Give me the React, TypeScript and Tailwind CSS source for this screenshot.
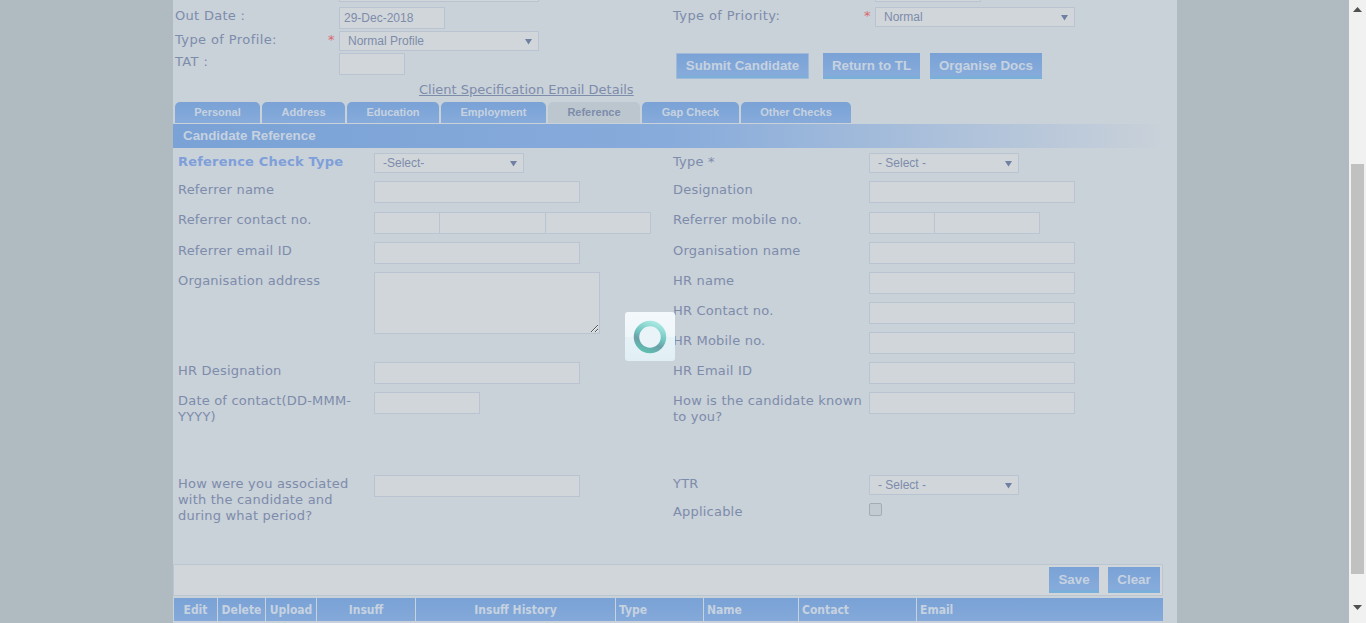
const labelFont = 'font-["DejaVu_Sans",sans-serif] text-[13px] leading-4 text-[#7d8cab] tracking-[0.2px]';
const boxStyle = 'box-border border border-[#b9c3d1] bg-[#d1d6da]';

const Input = ({ className = '', value = '' }: { className?: string; value?: string }) => (
  <input
    readOnly
    value={value}
    className={`${boxStyle} h-[22px] px-1 font-["Liberation_Sans",sans-serif] text-xs text-[#7d8cab] outline-none ${className}`}
  />
);

const Select = ({ text, className = '' }: { text: string; className?: string }) => (
  <div className={`${boxStyle} flex h-5 items-center justify-between pr-[6px] pl-2 font-["Liberation_Sans",sans-serif] text-xs text-[#7d8cab] ${className}`}>
    <span>{text}</span>
    <svg width="7" height="7" viewBox="0 0 7 7">
      <path d="M0 1h7L3.5 6.5z" fill="#6f80a3" />
    </svg>
  </div>
);

const Field = ({ label, children, className = '' }: { label: string; children?: React.ReactNode; className?: string }) => (
  <div className={`flex ${className}`}>
    <div className={`${labelFont} w-[196px] shrink-0 pt-px`}>{label}</div>
    {children}
  </div>
);

const Tab = ({ label, width, active }: { label: string; width: string; active?: boolean }) => (
  <div
    className={`flex h-[21px] items-center justify-center rounded-t-[5px] font-["Liberation_Sans",sans-serif] text-[11px] font-bold ${width} ${
      active ? 'bg-[#bcc6ce] text-[#7d8cab]' : 'bg-gradient-to-b from-[#7aa2d6] to-[#86abdb] text-[#c6d2e0]'
    }`}
  >
    {label}
  </div>
);

const ActionButton = ({ label, width, outlined }: { label: string; width: string; outlined?: boolean }) => (
  <div
    className={`flex h-[26px] items-center justify-center bg-[linear-gradient(#7aa2d6_0%,#86abdb_85%,#79afd8_92%,#79afd8_100%)] font-["Liberation_Sans",sans-serif] text-[13.33px] font-bold text-[#c6d2e0] ${width} ${
      outlined ? 'rounded-[2px] ring-1 ring-inset ring-[#a3b9d8]' : ''
    }`}
  >
    {label}
  </div>
);

const columns = [
  { label: 'Edit', width: 'w-[43px]', center: true },
  { label: 'Delete', width: 'w-[47px]', center: true },
  { label: 'Upload', width: 'w-[50px]', center: true },
  { label: 'Insuff', width: 'w-[98px]', center: true },
  { label: 'Insuff History', width: 'w-[199px]', center: true },
  { label: 'Type', width: 'w-[87px]' },
  { label: 'Name', width: 'w-[94px]' },
  { label: 'Contact', width: 'w-[117px]' },
  { label: 'Email', width: 'flex-1' },
];

const tabs = [
  { label: 'Personal', width: 'w-[85px]' },
  { label: 'Address', width: 'w-[83px]' },
  { label: 'Education', width: 'w-[92px]' },
  { label: 'Employment', width: 'w-[105px]' },
  { label: 'Reference', width: 'w-[92px]', active: true },
  { label: 'Gap Check', width: 'w-[97px]' },
  { label: 'Other Checks', width: 'w-[110px]' },
];

const App = () => {
  return (
    <div className="relative flex h-[623px] w-[1366px] overflow-hidden bg-[#b0bbc1]">
      <div className="ml-[173px] h-full w-[1004px] bg-[#c9d1d9]">
        {/* top of the form, scrolled part way out of view */}
        <div className="flex h-[2px] items-end overflow-hidden pl-[166px]">
          <div className={`${boxStyle} h-5 w-[200px]`} />
          <div className={`${boxStyle} ml-[336px] h-5 w-[106px]`} />
        </div>

        <div className="mt-[5px] flex h-[68px]">
          <div className="w-[500px] pl-[2px]">
            <div className="flex h-6">
              <div className={`${labelFont} w-[164px] pt-px tracking-[0.3px]`}>Out Date :</div>
              <Input value="29-Dec-2018" className="w-[106px] bg-[#c7cdd1]" />
            </div>
            <div className="flex h-[22px]">
              <div className={`${labelFont} flex w-[164px] justify-between pr-1 pt-px tracking-[0.4px]`}>
                Type of Profile:<span className="text-[#d9696e]">*</span>
              </div>
              <Select text="Normal Profile" className="w-[200px]" />
            </div>
            <div className="flex">
              <div className={`${labelFont} w-[164px] pt-px tracking-[0.4px]`}>TAT :</div>
              <Input className="w-[66px]" />
            </div>
          </div>
          <div>
            <div className="flex">
              <div className={`${labelFont} flex w-[202px] justify-between pr-1 pt-px tracking-[0.4px]`}>
                Type of Priority:<span className="text-[#d9696e]">*</span>
              </div>
              <Select text="Normal" className="w-[200px]" />
            </div>
            <div className="mt-[26px] ml-[3px] flex">
              <ActionButton label="Submit Candidate" width="w-[133px]" outlined />
              <ActionButton label="Return to TL" width="w-[97px] ml-[14px]" />
              <ActionButton label="Organise Docs" width="w-[112px] ml-[10px]" />
            </div>
          </div>
        </div>

        <div className={`mt-[7px] pl-[246px] ${labelFont} tracking-normal underline`}>Client Specification Email Details</div>

        <div className="mt-[4px] flex gap-[2px] pl-[2px]">
          {tabs.map((tab) => (
            <Tab key={tab.label} {...tab} />
          ))}
        </div>

        <div className="mt-px flex h-6 w-[991px] items-center bg-gradient-to-r from-[#7aa2d6] via-[#87abdb] to-[#c9d1d9] pl-[10px] font-['Liberation_Sans',sans-serif] text-[13.33px] font-bold text-[#c6d2e0]">
          Candidate Reference
        </div>

        <div className="mt-[5px] flex h-[411px] pl-[5px]">
          <div className="w-[495px]">
            <Field label="Reference Check Type" className="h-7 [&>div:first-child]:font-bold [&>div:first-child]:text-[#7f9fd9]">
              <Select text="-Select-" className="w-[150px]" />
            </Field>
            <Field label="Referrer name" className="h-[31px]">
              <Input className="w-[206px]" />
            </Field>
            <Field label="Referrer contact no." className="h-[30px] [&>div:first-child]:pt-0">
              <Input className="w-[66px]" />
              <Input className="-ml-px w-[107px]" />
              <Input className="-ml-px w-[106px]" />
            </Field>
            <Field label="Referrer email ID" className="h-[30px]">
              <Input className="w-[206px]" />
            </Field>
            <Field label="Organisation address" className="h-[90px]">
              <textarea readOnly className={`${boxStyle} h-[62px] w-[226px] outline-none`} />
            </Field>
            <Field label="HR Designation" className="h-[30px]">
              <Input className="w-[206px]" />
            </Field>
            <Field label="Date of contact(DD-MMM-YYYY)" className="h-[83px]">
              <Input className="w-[106px]" />
            </Field>
            <Field label="How were you associated with the candidate and during what period?">
              <Input className="w-[206px]" />
            </Field>
          </div>
          <div>
            <Field label="Type *" className="h-7">
              <Select text="- Select -" className="w-[150px]" />
            </Field>
            <Field label="Designation" className="h-[31px]">
              <Input className="w-[206px]" />
            </Field>
            <Field label="Referrer mobile no." className="h-[30px] [&>div:first-child]:pt-0">
              <Input className="w-[66px]" />
              <Input className="-ml-px w-[106px]" />
            </Field>
            <Field label="Organisation name" className="h-[30px]">
              <Input className="w-[206px]" />
            </Field>
            <Field label="HR name" className="h-[30px]">
              <Input className="w-[206px]" />
            </Field>
            <Field label="HR Contact no." className="h-[30px]">
              <Input className="w-[206px]" />
            </Field>
            <Field label="HR Mobile no." className="h-[30px]">
              <Input className="w-[206px]" />
            </Field>
            <Field label="HR Email ID" className="h-[30px]">
              <Input className="w-[206px]" />
            </Field>
            <Field label="How is the candidate known to you?" className="h-[83px]">
              <Input className="w-[206px]" />
            </Field>
            <Field label="YTR" className="h-7">
              <Select text="- Select -" className="w-[150px]" />
            </Field>
            <Field label="Applicable">
              <div className="box-border h-[13px] w-[13px] rounded-[2px] border border-[#a3acb5] bg-[#c3cbd2]" />
            </Field>
          </div>
        </div>

        <div className={`${boxStyle} flex h-[32px] w-[990px] items-start justify-end gap-[9px] border-[#bcc6d1] pt-[2px] pr-[2px]`}>
          <ActionButton label="Save" width="w-[50px]" />
          <ActionButton label="Clear" width="w-[52px]" />
        </div>

        <div className="mt-[2px] flex h-[23px] w-[990px] gap-px pl-px">
          {columns.map((col) => (
            <div
              key={col.label}
              className={`flex items-center bg-gradient-to-b from-[#7aa2d6] to-[#84a9da] font-['DejaVu_Sans_Condensed','DejaVu_Sans',sans-serif] text-xs font-bold text-[#c6d2e0] ${col.width} ${
                col.center ? 'justify-center' : 'pl-[3px]'
              }`}
            >
              {col.label}
            </div>
          ))}
        </div>
      </div>

      <div className="ml-auto flex h-full w-[17px] flex-col items-center bg-[#f1f1f1]">
        <svg className="mt-[7px]" width="9" height="5" viewBox="0 0 9 5">
          <path d="M4.5 0L9 5H0z" fill="#505050" />
        </svg>
        <div className="mt-[152px] h-[410px] w-[13px] bg-[#c1c1c1]" />
        <svg className="mt-[31px]" width="9" height="5" viewBox="0 0 9 5">
          <path d="M0 0h9L4.5 5z" fill="#505050" />
        </svg>
      </div>

      {/* loading spinner */}
      <div className="absolute top-[312px] left-[625px] flex h-[49px] w-[50px] items-center justify-center rounded-[3px] bg-[linear-gradient(#f3f8fb_0%,#eff6fa_50%,#e6f2f6_50%,#e1eff5_100%)]">
        <svg width="34" height="34" viewBox="0 0 34 34">
          <defs>
            <linearGradient id="ring" x1="0.7" y1="0" x2="0.3" y2="1">
              <stop offset="0" stopColor="#a5e6e0" />
              <stop offset="0.45" stopColor="#6fc4c0" />
              <stop offset="0.7" stopColor="#6b9fa8" />
              <stop offset="1" stopColor="#5fbdb0" />
            </linearGradient>
          </defs>
          <circle cx="17" cy="17" r="13.5" fill="#eaf4f8" stroke="url(#ring)" strokeWidth="5.5" />
        </svg>
      </div>
    </div>
  );
};

export default App;
